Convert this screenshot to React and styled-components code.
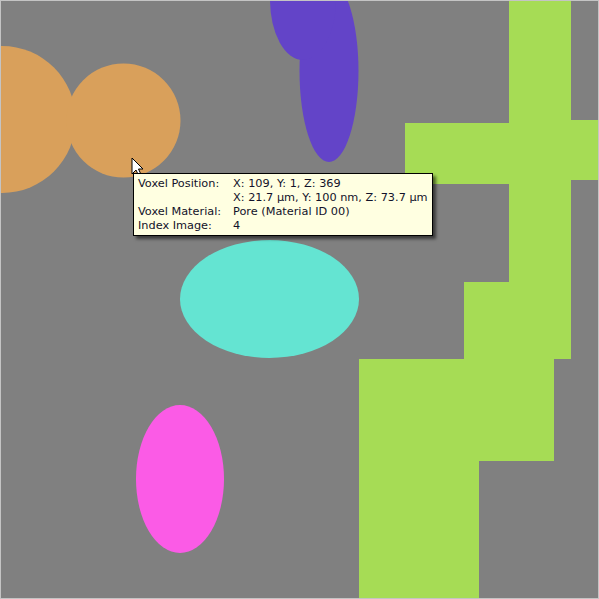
import React from "react";
import styled, { createGlobalStyle } from "styled-components";

const Global = createGlobalStyle`
  html, body { margin: 0; padding: 0; background: #808080; }
  #root { width: 599px; height: 599px; }
`;

const Frame = styled.div`
  position: relative;
  width: 599px;
  height: 599px;
  box-sizing: border-box;
  border: 1px solid #c4c4c4;
  background: #808080;
  overflow: hidden;
`;

const Canvas = styled.svg`
  display: block;
  width: 597px;
  height: 597px;
`;

const Tooltip = styled.div`
  position: absolute;
  left: 132px;
  top: 172px;
  width: 300px;
  height: 63px;
  box-sizing: border-box;
  border: 1px solid #000;
  background: #ffffe1;
  box-shadow: 3px 3px 3px rgba(0, 0, 0, 0.55);
  padding: 3px 0 0 4px;
  display: grid;
  grid-template-columns: 95px auto;
  grid-auto-rows: 14px;
  font-family: "DejaVu Sans", "Liberation Sans", sans-serif;
  font-size: 11.3px;
  line-height: 14px;
  color: #12122a;
  white-space: nowrap;
`;

const Label = styled.span``;
const Value = styled.span``;

const Cursor = styled.svg`
  position: absolute;
  left: 130px;
  top: 156px;
  width: 13px;
  height: 20px;
  overflow: visible;
`;

const rows = [
  ["Voxel Position:", "X: 109, Y: 1, Z: 369"],
  ["", "X: 21.7 µm, Y: 100 nm, Z: 73.7 µm"],
  ["Voxel Material:", "Pore (Material ID 00)"],
  ["Index Image:", "4"],
];

const green = "#a6dc55";
const greenRects = [
  [509, 0, 62, 359],
  [571, 120, 30, 60],
  [405, 123, 104, 61],
  [464, 282, 107, 77],
  [359, 359, 195, 102],
  [359, 461, 120, 140],
];

export default function App() {
  return (
    <>
      <Global />
      <Frame>
        <Canvas viewBox="1 1 597 597">
          <rect x="0" y="0" width="600" height="600" fill="#808080" />
          <circle cx="2" cy="119.5" r="73.5" fill="#d9a05b" />
          <circle cx="123.5" cy="120.5" r="57" fill="#d9a05b" />
          <ellipse cx="329" cy="71" rx="29.5" ry="91" fill="#6344c8" />
          <ellipse cx="303" cy="0" rx="33" ry="60" fill="#6344c8" />
          <ellipse cx="269.5" cy="299" rx="89.5" ry="59" fill="#64e4d2" />
          <ellipse cx="180" cy="479" rx="44" ry="74" fill="#fb5be6" />
          {greenRects.map(([x, y, w, h], i) => (
            <rect key={i} x={x} y={y} width={w} height={h} fill={green} shapeRendering="crispEdges" />
          ))}
        </Canvas>
        <Cursor viewBox="0 0 13 20">
          <path
            d="M1 1 L1 17 L5 13 L8 19.5 L10.5 18.5 L7.5 12 L12 12 Z"
            fill="#fff"
            stroke="#000"
            strokeWidth="1"
            strokeLinejoin="miter"
          />
        </Cursor>
        <Tooltip>
          {rows.map(([l, v], i) => (
            <React.Fragment key={i}>
              <Label>{l}</Label>
              <Value>{v}</Value>
            </React.Fragment>
          ))}
        </Tooltip>
      </Frame>
    </>
  );
}
